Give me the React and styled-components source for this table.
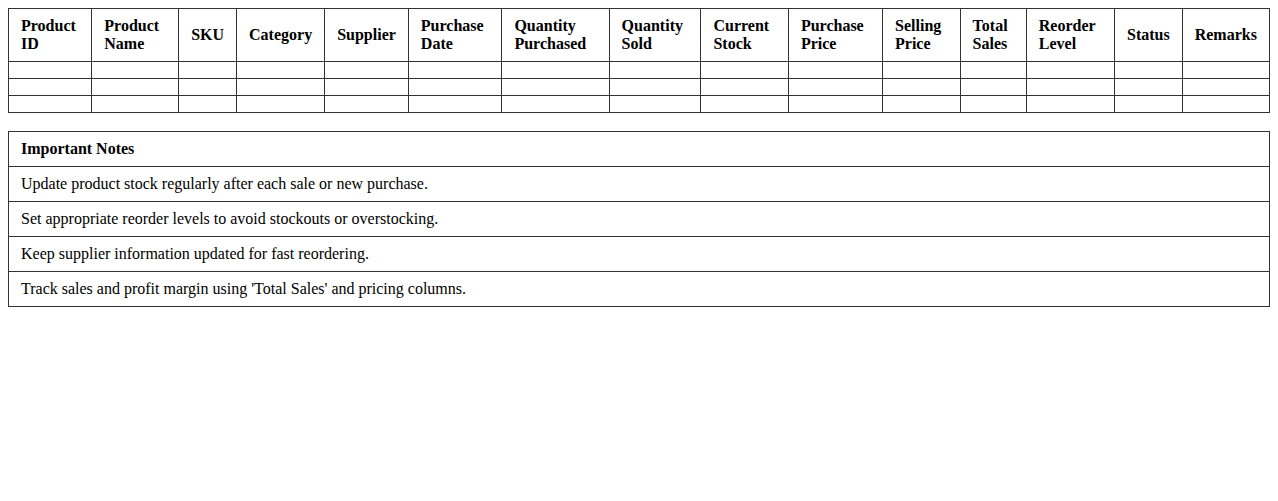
import React from 'react'
import styled, { createGlobalStyle } from 'styled-components'

const GlobalStyle = createGlobalStyle`
  body {
    margin: 8px;
    background: #fff;
    color: #000;
    font-family: "Liberation Serif", "Times New Roman", serif;
    font-size: 16px;
  }
`

const columns = [
  'Product ID',
  'Product Name',
  'SKU',
  'Category',
  'Supplier',
  'Purchase Date',
  'Quantity Purchased',
  'Quantity Sold',
  'Current Stock',
  'Purchase Price',
  'Selling Price',
  'Total Sales',
  'Reorder Level',
  'Status',
  'Remarks',
]

const notes = [
  'Update product stock regularly after each sale or new purchase.',
  'Set appropriate reorder levels to avoid stockouts or overstocking.',
  'Keep supplier information updated for fast reordering.',
  "Track sales and profit margin using 'Total Sales' and pricing columns.",
]

export default function App() {
  return (
    <>
      <GlobalStyle />
      <Table>
        <thead>
          <tr>
            {columns.map((c) => (
              <Th key={c}>{c}</Th>
            ))}
          </tr>
        </thead>
        <tbody>
          {[0, 1, 2].map((r) => (
            <tr key={r}>
              {columns.map((c) => (
                <Td key={c} />
              ))}
            </tr>
          ))}
        </tbody>
      </Table>

      <NotesTable>
        <thead>
          <tr>
            <Th>Important Notes</Th>
          </tr>
        </thead>
        <tbody>
          {notes.map((n) => (
            <tr key={n}>
              <Td>{n}</Td>
            </tr>
          ))}
        </tbody>
      </NotesTable>
    </>
  )
}

const Table = styled.table`
  width: 100%;
  border-collapse: collapse;
`

const NotesTable = styled(Table)`
  margin-top: 18px;
`

const Th = styled.th`
  border: 1px solid #333;
  padding: 8px 12px;
  text-align: left;
  font-weight: bold;
`

const Td = styled.td`
  border: 1px solid #333;
  padding: 8px 12px;
  text-align: left;
`
